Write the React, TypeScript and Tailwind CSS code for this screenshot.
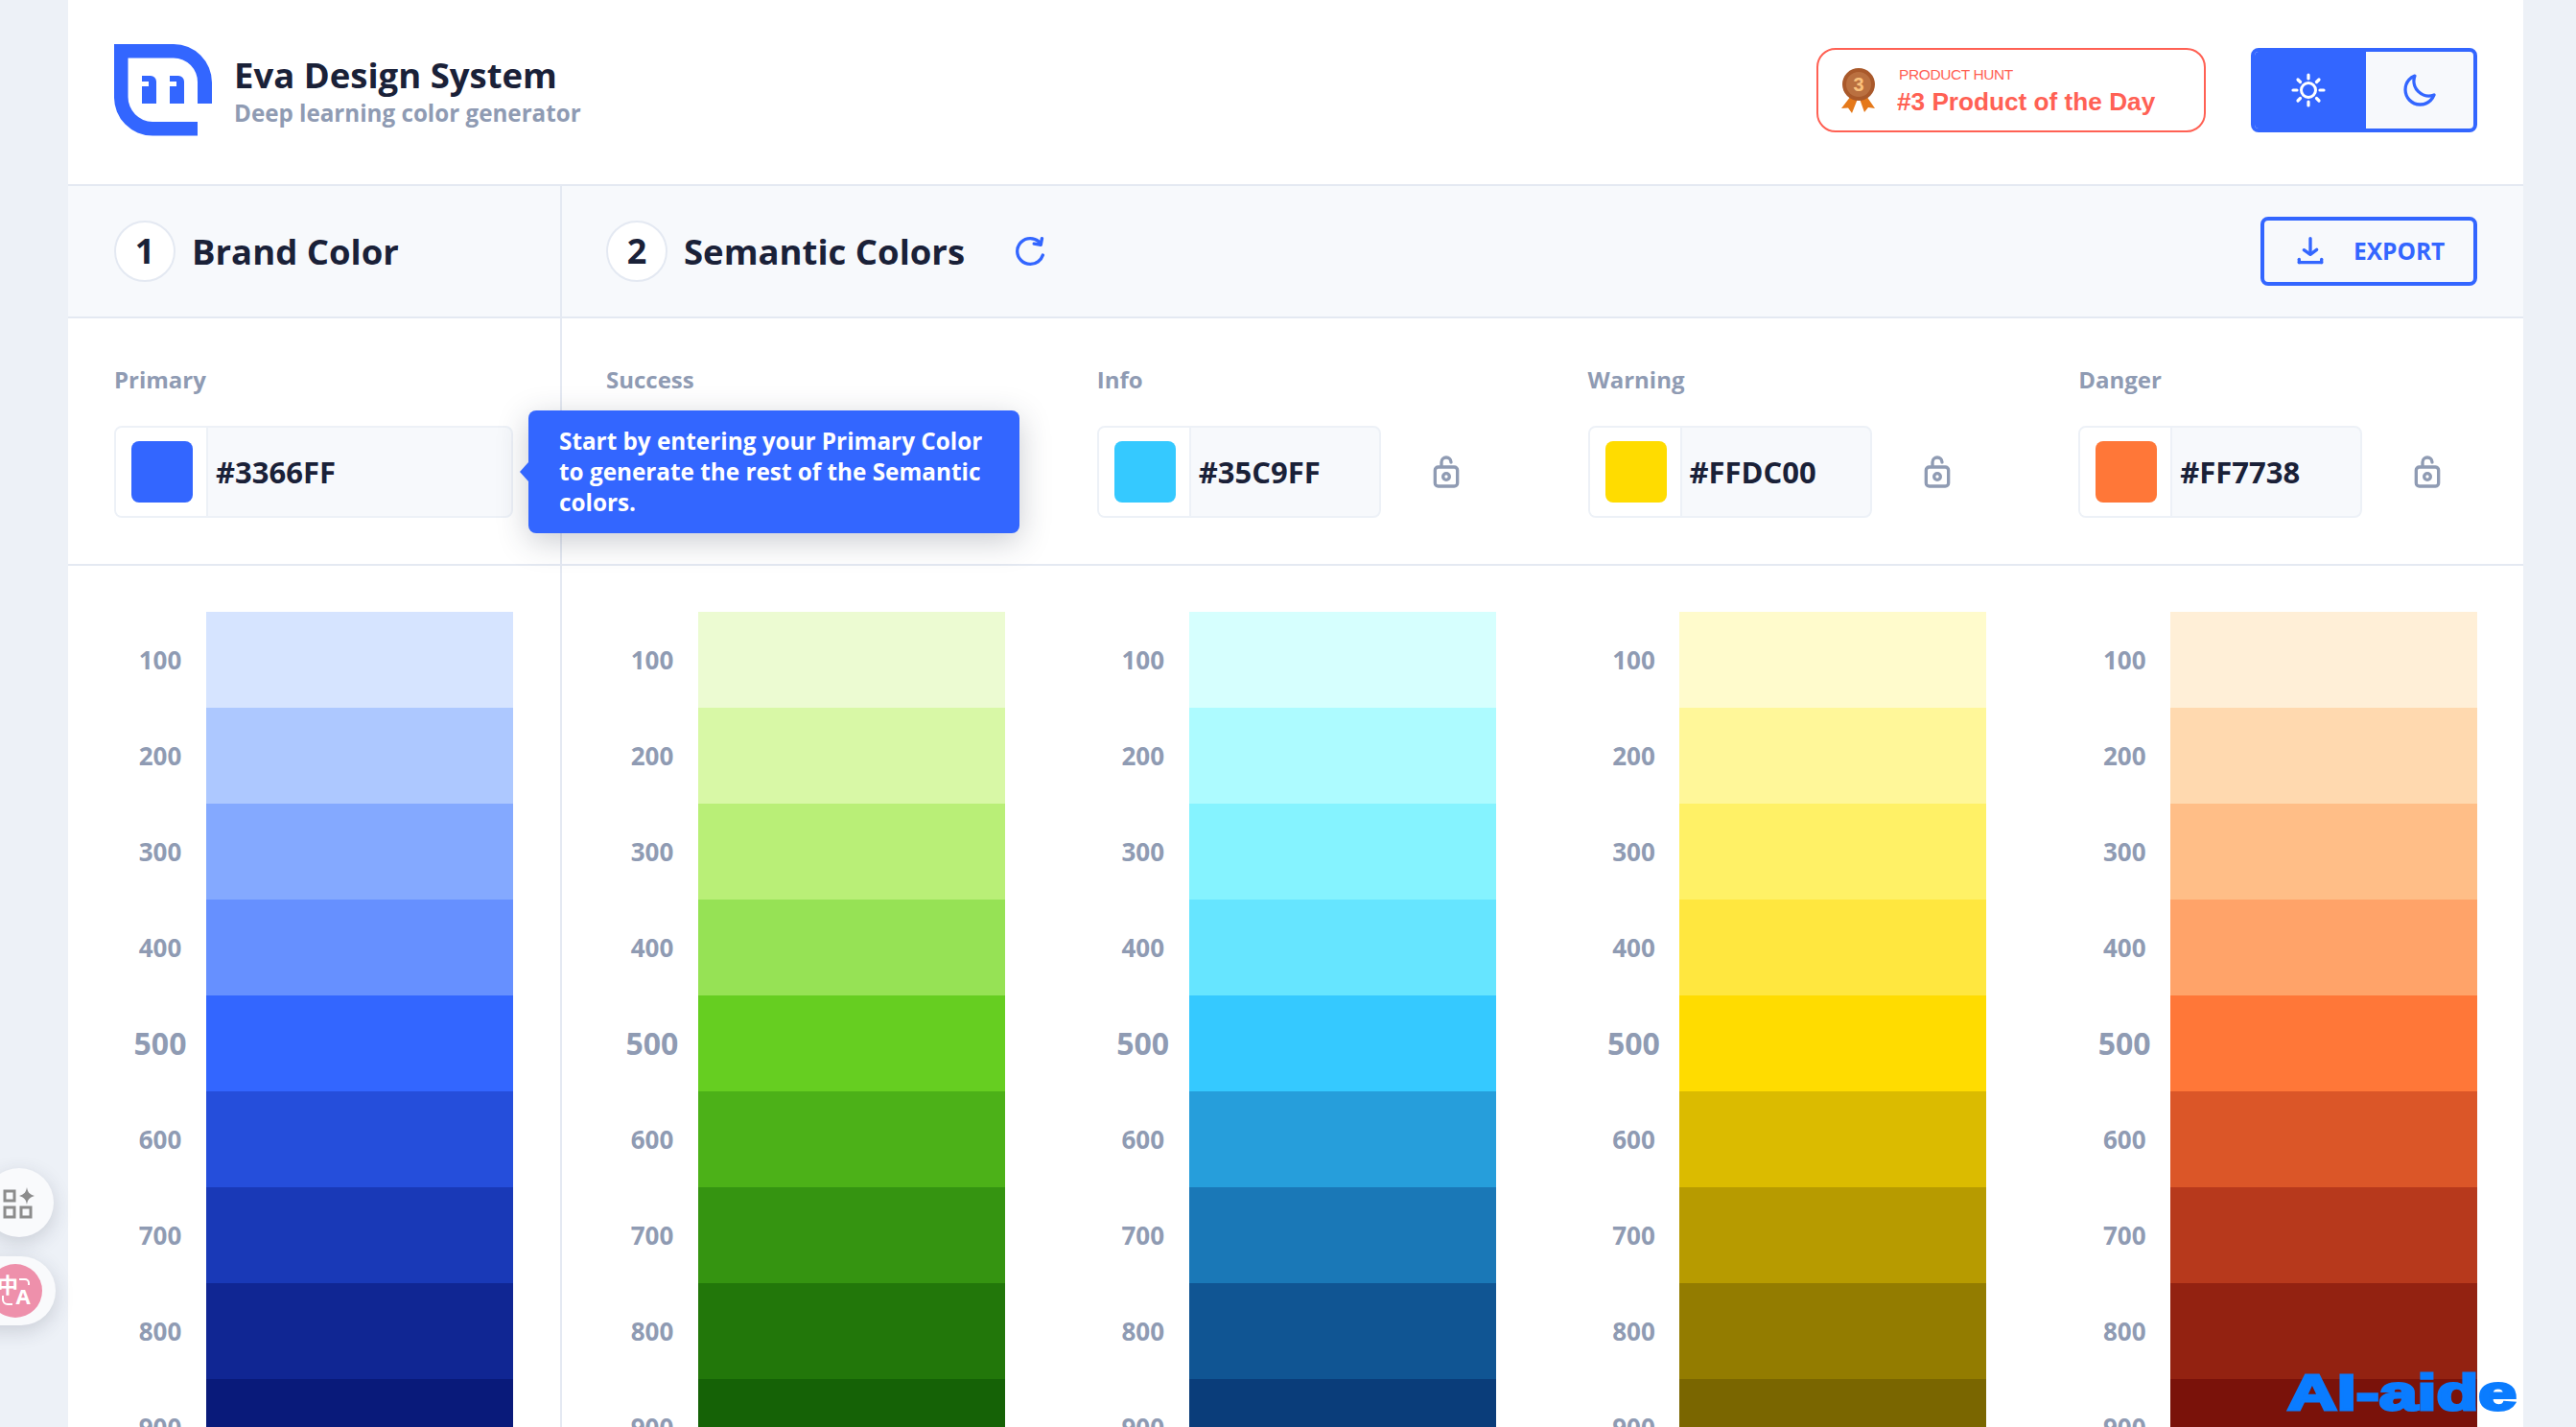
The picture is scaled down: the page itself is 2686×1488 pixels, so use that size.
import React from 'react';

const shades = [100, 200, 300, 400, 500, 600, 700, 800, 900];

const palettes = [
  { name: 'Primary', hex: '#3366FF', colors: ['#D6E4FF', '#ADC8FF', '#84A9FF', '#6690FF', '#3366FF', '#254EDB', '#1939B7', '#102693', '#091A7A'] },
  { name: 'Success', hex: '#66CE21', colors: ['#ECFBD2', '#D8F8A6', '#B9EF77', '#96E255', '#66CE21', '#4CB118', '#359411', '#22770A', '#156206'] },
  { name: 'Info', hex: '#35C9FF', colors: ['#D6FFFE', '#ADFBFF', '#85F3FF', '#66E5FF', '#35C9FF', '#269EDB', '#1A78B7', '#105593', '#0A3D7A'] },
  { name: 'Warning', hex: '#FFDC00', colors: ['#FFFBCC', '#FFF799', '#FFF166', '#FFE73F', '#FFDC00', '#DBBB00', '#B79B00', '#937C00', '#7A6600'] },
  { name: 'Danger', hex: '#FF7738', colors: ['#FFEFD7', '#FFD9AF', '#FFBE87', '#FFA369', '#FF7738', '#DB5628', '#B7391C', '#932211', '#7A120A'] },
];

function Logo() {
  return (
    <svg width="102" height="96" viewBox="0 0 102 96" fill="#3366FF">
      <path d="M0 0H62A40 40 0 0 1 102 40V62H87V40A25 25 0 0 0 62 14.5H14.5V55A26 26 0 0 0 40 81H87V95.5H40A40 40 0 0 1 0 55Z" />
      <path d="M29 33H38A6 6 0 0 1 44 39V62H29V44H36V39H29Z" />
      <path d="M58 33H67A6 6 0 0 1 73 39V62H58V44H65V39H58Z" />
    </svg>
  );
}

function Medal() {
  return (
    <svg width="36" height="48" viewBox="0 0 36 48" className="shrink-0">
      <path d="M10 30L0 43L7 42.500L11 48L17 33Z" fill="#E5791A" />
      <path d="M26 30L35 43L28 42L24 47L19 33Z" fill="#E5791A" />
      <circle cx="18" cy="18" r="17" fill="#A9592B" />
      <circle cx="18" cy="18" r="13" fill="#BA7040" />
      <text x="18" y="25" textAnchor="middle" fontSize="20" fontWeight="700" fontFamily="Liberation Sans, sans-serif" fill="#FBC27C">3</text>
    </svg>
  );
}

function SunIcon() {
  return (
    <svg width="36" height="36" viewBox="0 0 36 36" fill="none" stroke="#fff" strokeLinecap="round">
      <circle cx="18" cy="18" r="7.500" strokeWidth="3" />
      <g strokeWidth="3.200">
        <path d="M18 2V6" />
        <path d="M18 30V34" />
        <path d="M2 18H6" />
        <path d="M30 18H34" />
        <path d="M7 7L9.500 9.500" />
        <path d="M26.500 26.500L29 29" />
        <path d="M7 29L9.500 26.500" />
        <path d="M26.500 9.500L29 7" />
      </g>
    </svg>
  );
}

function MoonIcon() {
  return (
    <svg width="40" height="40" viewBox="0 0 24 24" fill="#3366FF">
      <path d="M12.300 22h-.1a10.310 10.310 0 0 1-7.340-3.150 10.460 10.460 0 0 1-.26-14 10.130 10.130 0 0 1 4-2.740 1 1 0 0 1 1.060.22 1 1 0 0 1 .24 1 8.400 8.400 0 0 0 1.940 8.810 8.470 8.470 0 0 0 8.830 1.940 1 1 0 0 1 1.270 1.290A10.160 10.160 0 0 1 19.600 19a10.280 10.280 0 0 1-7.300 3zM7.460 4.920a7.930 7.930 0 0 0-1.370 1.220 8.440 8.440 0 0 0 .2 11.320A8.290 8.290 0 0 0 12.220 20h.08a8.340 8.340 0 0 0 6.780-3.490A10.370 10.370 0 0 1 7.460 4.920z" />
    </svg>
  );
}

function RefreshIcon() {
  return (
    <svg width="40" height="40" viewBox="0 0 24 24" fill="#3366FF">
      <path d="M20.300 13.430a1 1 0 0 0-1.250.65A7.140 7.140 0 0 1 12.180 19 7.100 7.100 0 0 1 5 12a7.100 7.100 0 0 1 7.180-7 7.260 7.260 0 0 1 4.650 1.670l-2.170-.36a1 1 0 0 0-1.150.83 1 1 0 0 0 .83 1.150l4.240.7h.17a1 1 0 0 0 .34-.06.330.330 0 0 0 .1-.06.780.780 0 0 0 .2-.11l.09-.11c0-.05.09-.09.13-.15s0-.1.05-.14a1.340 1.340 0 0 0 .07-.18l.75-4a1 1 0 0 0-2-.38l-.27 1.450A9.210 9.210 0 0 0 12.180 3 9.100 9.100 0 0 0 3 12a9.100 9.100 0 0 0 9.180 9A9.120 9.120 0 0 0 21 14.680a1 1 0 0 0-.7-1.250z" />
    </svg>
  );
}

function DownloadIcon() {
  return (
    <svg width="40" height="40" viewBox="0 0 24 24" fill="#3366FF">
      <rect x="4" y="18" width="16" height="2" rx="1" />
      <rect x="3" y="17" width="4" height="2" rx="1" transform="rotate(-90 5 18)" />
      <rect x="17" y="17" width="4" height="2" rx="1" transform="rotate(-90 19 18)" />
      <path d="M12 15a1 1 0 0 1-.58-.18l-4-2.820a1 1 0 0 1-.24-1.390 1 1 0 0 1 1.400-.24L12 12.760l3.400-2.560a1 1 0 0 1 1.200 1.600l-4 3a1 1 0 0 1-.6.2z" />
      <rect x="11" y="3" width="2" height="10" rx="1" />
    </svg>
  );
}

function UnlockIcon() {
  return (
    <svg width="40" height="40" viewBox="0 0 24 24" fill="#8F9BB3">
      <path d="M17 8h-7V6a2 2 0 0 1 4 0 1 1 0 0 0 2 0 4 4 0 0 0-8 0v2H7a3 3 0 0 0-3 3v8a3 3 0 0 0 3 3h10a3 3 0 0 0 3-3v-8a3 3 0 0 0-3-3zm1 11a1 1 0 0 1-1 1H7a1 1 0 0 1-1-1v-8a1 1 0 0 1 1-1h10a1 1 0 0 1 1 1z" />
      <path d="M12 12a3 3 0 1 0 3 3 3 3 0 0 0-3-3zm0 4a1 1 0 1 1 1-1 1 1 0 0 1-1 1z" />
    </svg>
  );
}

function ColorInput({ hex, wide }: { hex: string; wide?: boolean }) {
  return (
    <div className={`flex h-[96px] overflow-hidden rounded-lg border-2 border-[#edf1f7] bg-[#f7f9fc] ${wide ? 'w-[416px]' : 'w-[296px]'}`}>
      <div className="flex w-[96px] shrink-0 items-center justify-center border-r-2 border-[#edf1f7] bg-white">
        <div className="ml-[2px] h-[64px] w-[64px] rounded-lg" style={{ backgroundColor: hex }} />
      </div>
      <div className="flex items-center pl-[8px] text-[31px] font-bold text-[#1a2138]">{hex}</div>
    </div>
  );
}

function Scale({ colors }: { colors: string[] }) {
  return (
    <div className="flex flex-col">
      {shades.map((shade, i) => (
        <div key={shade} className="flex h-[100px]">
          <div className={`flex w-[96px] items-center justify-center font-bold text-[#8f9bb3] ${shade === 500 ? 'text-[32px]' : 'text-[26px]'}`}>{shade}</div>
          <div className="w-[320px]" style={{ backgroundColor: colors[i] }} />
        </div>
      ))}
    </div>
  );
}

function StepTitle({ n, title }: { n: number; title: string }) {
  return (
    <div className="flex items-center gap-[17px]">
      <div className="flex h-[64px] w-[64px] items-center justify-center rounded-full border-2 border-[#e4e9f2] bg-white text-[36px] font-bold text-[#1a2138]">{n}</div>
      <h2 className="text-[36.500px] font-bold text-[#1a2138]">{title}</h2>
    </div>
  );
}

export default function App() {
  const [primary, ...semantic] = palettes;
  return (
    <div className="relative h-[1488px] w-[2686px] overflow-hidden bg-[#edf1f7] pl-[71px] font-['Open_Sans',sans-serif]">
      <div className="w-[2560px] bg-white">
        {/* Header */}
        <header className="flex h-[194px] items-center justify-between border-b-2 border-[#e4e9f2] px-[48px] pb-[4px]">
          <div className="flex items-center gap-[23px]">
            <Logo />
            <div className="flex flex-col">
              <h1 className="text-[36.500px] leading-[44px] font-bold text-[#1a2138]">Eva Design System</h1>
              <p className="mt-[3px] text-[24.200px] leading-[30px] font-bold text-[#8f9bb3]">Deep learning color generator</p>
            </div>
          </div>
          <div className="flex items-center gap-[47px]">
            <div className="flex h-[88px] w-[406px] items-center rounded-[20px] border-2 border-[#ff6154] pl-[24px] font-['Liberation_Sans',sans-serif] text-[#ff6154]">
              <Medal />
              <div className="mt-[3px] ml-[22px] flex flex-col">
                <span className="ml-[2px] text-[15.500px] leading-[19px] tracking-[-0.4px]">PRODUCT HUNT</span>
                <span className="mt-[2px] text-[26.200px] leading-[34px] font-bold">#3 Product of the Day</span>
              </div>
            </div>
            <div className="flex h-[88px] w-[236px] overflow-hidden rounded-lg border-4 border-[#3366ff] bg-[#f7f9fc]">
              <div className="flex w-[116px] items-center justify-center bg-[#3366ff] pr-[4px]"><SunIcon /></div>
              <div className="flex flex-1 items-center justify-center"><MoonIcon /></div>
            </div>
          </div>
        </header>

        {/* Step titles */}
        <div className="flex h-[138px] border-b-2 border-[#e4e9f2] bg-[#f7f9fc]">
          <div className="flex w-[515px] items-center border-r-2 border-[#e4e9f2] pl-[48px]">
            <StepTitle n={1} title="Brand Color" />
          </div>
          <div className="flex flex-1 items-center justify-between pr-[48px] pl-[46px]">
            <div className="flex items-center gap-[48px]">
              <StepTitle n={2} title="Semantic Colors" />
              <RefreshIcon />
            </div>
            <button className="flex h-[72px] w-[226px] items-center rounded-lg border-4 border-[#3366ff] pl-[28px] text-[24.500px] font-bold text-[#3366ff]">
              <DownloadIcon />
              <span className="ml-[25px]">EXPORT</span>
            </button>
          </div>
        </div>

        {/* Inputs */}
        <div className="flex h-[258px] border-b-2 border-[#e4e9f2]">
          <div className="w-[515px] border-r-2 border-[#e4e9f2] pt-[48px] pl-[48px]">
            <div className="mb-[32px] h-[32px] text-[24px] leading-[32px] font-bold text-[#8f9bb3]">{primary.name}</div>
            <div className="relative w-[416px]">
              <ColorInput hex={primary.hex} wide />
              <div className="absolute top-[-16px] left-[432px] z-10 h-[128px] w-[512px] rounded-lg bg-[#3366ff] px-[32px] py-[16px] text-[24.300px] leading-[32px] font-bold text-white shadow-[0_8px_32px_rgba(44,51,73,0.25)]">
                <span className="absolute top-[54px] left-[-9px] h-0 w-0 border-y-[10px] border-r-[9px] border-y-transparent border-r-[#3366ff]" />
                Start by entering your Primary Color to generate the rest of the Semantic colors.
              </div>
            </div>
          </div>
          <div className="grid flex-1 grid-cols-4 gap-x-[96px] pt-[48px] pr-[48px] pl-[46px]">
            {semantic.map(p => (
              <div key={p.name}>
                <div className="mb-[32px] h-[32px] text-[24px] leading-[32px] font-bold text-[#8f9bb3]">{p.name}</div>
                {p.name !== 'Success' && (
                  <div className="flex items-center gap-[48px]">
                    <ColorInput hex={p.hex} />
                    <UnlockIcon />
                  </div>
                )}
              </div>
            ))}
          </div>
        </div>

        {/* Shade scales */}
        <div className="flex">
          <div className="w-[515px] border-r-2 border-[#e4e9f2] pt-[48px] pl-[48px]">
            <Scale colors={primary.colors} />
          </div>
          <div className="grid flex-1 grid-cols-4 gap-x-[96px] pt-[48px] pr-[48px] pl-[46px]">
            {semantic.map(p => <Scale key={p.name} colors={p.colors} />)}
          </div>
        </div>
      </div>

      {/* Floating browser-extension buttons */}
      <div className="absolute top-[1218px] left-[-16px] flex h-[72px] w-[72px] items-center justify-center rounded-full bg-[#f9fafc] shadow-[0_6px_20px_rgba(44,51,73,0.18)]">
        <svg width="36" height="36" viewBox="0 0 36 36" fill="none" stroke="#8c8c8c" strokeWidth="3">
          <rect x="3" y="6" width="10" height="10" />
          <rect x="3" y="23" width="10" height="10" />
          <rect x="20" y="23" width="10" height="10" />
          <path d="M26 2C27 7 28 9 34 11C28 13 27 15 26 20C25 15 24 13 18 11C24 9 25 7 26 2Z" fill="#8c8c8c" stroke="none" />
        </svg>
      </div>
      <div className="absolute top-[1310px] left-[-40px] flex h-[72px] w-[98px] items-center justify-end rounded-full bg-[#f9fafc] pr-[14px] shadow-[0_6px_20px_rgba(44,51,73,0.18)]">
        <div className="flex h-[56px] w-[56px] items-center justify-center rounded-full bg-[#ee90ab]">
          <svg width="56" height="56" viewBox="0 0 56 56" fill="none" stroke="#fff" strokeWidth="2">
            <text x="20" y="30" textAnchor="middle" fontSize="22" fontWeight="700" fontFamily="Noto Sans CJK SC, sans-serif" fill="#fff" stroke="none">中</text>
            <text x="36" y="42" textAnchor="middle" fontSize="22" fontWeight="700" fontFamily="Open Sans, sans-serif" fill="#fff" stroke="none">A</text>
            <path d="M32 16H38A4 4 0 0 1 42 20V22" />
            <path d="M15 33V37A5 5 0 0 0 20 42H25" />
          </svg>
        </div>
      </div>

      {/* Watermark */}
      <div className="absolute top-[1416px] left-[2385px] origin-left scale-x-[1.38] font-['Liberation_Sans',sans-serif] text-[52px] leading-[72px] font-bold whitespace-nowrap text-[#0a7cff] [-webkit-text-stroke:3px_#0a7cff]">AI-aide</div>
    </div>
  );
}
